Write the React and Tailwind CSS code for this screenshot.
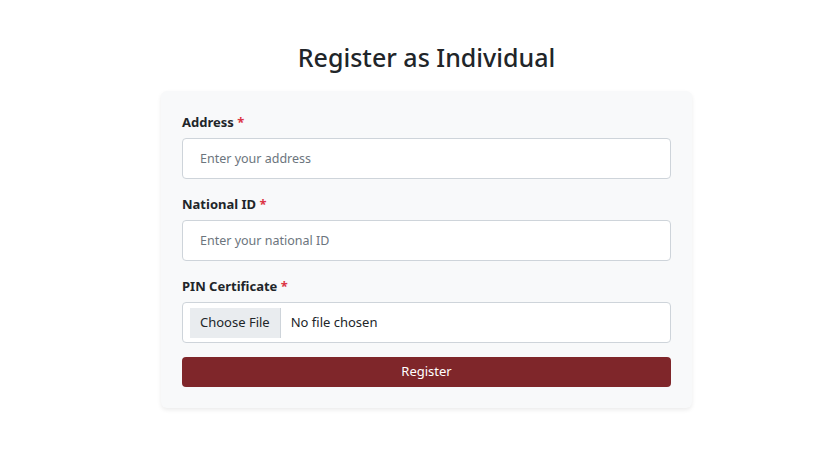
export default function App() {
  return (
    <div
      className="min-h-[461px] bg-white flex justify-center pl-[32px] pt-[40px]"
      style={{ fontFamily: '"Noto Sans", "Open Sans", sans-serif' }}
    >
      <div className="w-[531px] flex flex-col">
        <h2 className="text-center text-[25px] leading-[34px] font-medium text-[#212529] mb-[17px]">
          Register as Individual
        </h2>
        <div className="bg-[#f8f9fa] rounded-[6px] shadow-[0_2px_4px_rgba(0,0,0,0.08)] p-[21px] flex flex-col">
          <label className="text-[13px] leading-[20px] font-bold text-[#212529] mb-[6px]">
            Address <span className="text-[#dc3545]">*</span>
          </label>
          <input
            className="h-[41px] w-full bg-white border border-[#ced4da] rounded-[4px] px-[17px] text-[12.5px] text-[#212529] placeholder:text-[#6c757d] outline-none mb-[15px]"
            placeholder="Enter your address"
          />
          <label className="text-[13px] leading-[20px] font-bold text-[#212529] mb-[6px]">
            National ID <span className="text-[#dc3545]">*</span>
          </label>
          <input
            className="h-[41px] w-full bg-white border border-[#ced4da] rounded-[4px] px-[17px] text-[12.5px] text-[#212529] placeholder:text-[#6c757d] outline-none mb-[15px]"
            placeholder="Enter your national ID"
          />
          <label className="text-[13px] leading-[20px] font-bold text-[#212529] mb-[6px]">
            PIN Certificate <span className="text-[#dc3545]">*</span>
          </label>
          <div className="h-[41px] w-full bg-white border border-[#ced4da] rounded-[4px] flex items-center pl-[7px] mb-[14px]">
            <span className="h-[30px] flex items-center px-[10px] bg-[#e9ecef] border-r border-[#ced4da] text-[13px] text-[#212529]">
              Choose File
            </span>
            <span className="ml-[10px] text-[13px] text-[#212529]">No file chosen</span>
          </div>
          <button className="h-[30px] w-full bg-[#7f262a] rounded-[4px] text-white text-[13px]">
            Register
          </button>
        </div>
      </div>
    </div>
  );
}
